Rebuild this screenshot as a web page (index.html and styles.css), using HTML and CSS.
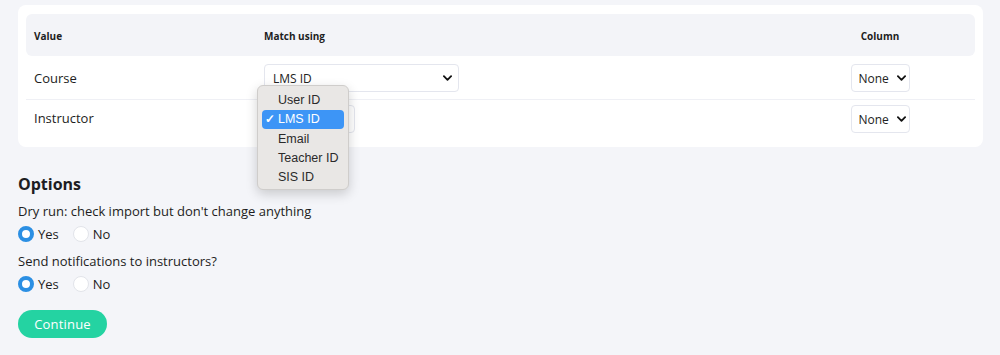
FILE: index.html
```html
<!DOCTYPE html>
<html>
<head>
<meta charset="utf-8">
<link rel="stylesheet" href="styles.css">
</head>
<body>
<div class="page">
  <div class="card">
    <div class="table">
      <div class="row head">
        <div class="cell">Value</div>
        <div class="cell">Match using</div>
        <div class="cell center">Column</div>
      </div>
      <div class="row first">
        <div class="cell label">Course</div>
        <div class="cell"><div class="select wide"><span>LMS ID</span><svg class="chev" viewBox="0 0 10 6"><path d="M1 1l4 4 4-4" /></svg></div></div>
        <div class="cell center"><div class="select small"><span>None</span><svg class="chev" viewBox="0 0 10 6"><path d="M1 1l4 4 4-4" /></svg></div></div>
      </div>
      <div class="row last">
        <div class="cell label">Instructor</div>
        <div class="cell"><div class="select mid"><span class="covered">LMS ID</span><svg class="chev" viewBox="0 0 10 6"><path d="M1 1l4 4 4-4" /></svg></div></div>
        <div class="cell center"><div class="select small"><span>None</span><svg class="chev" viewBox="0 0 10 6"><path d="M1 1l4 4 4-4" /></svg></div></div>
      </div>
    </div>
    <div class="menu">
      <div class="item">User ID</div>
      <div class="item selected"><span class="check">✓</span>LMS ID</div>
      <div class="item">Email</div>
      <div class="item">Teacher ID</div>
      <div class="item">SIS ID</div>
    </div>
  </div>

  <h2 class="title">Options</h2>
  <div class="question">Dry run: check import but don't change anything</div>
  <div class="radios">
    <label class="radio"><span class="dot on"></span>Yes</label>
    <label class="radio"><span class="dot"></span>No</label>
  </div>
  <div class="question">Send notifications to instructors?</div>
  <div class="radios">
    <label class="radio"><span class="dot on"></span>Yes</label>
    <label class="radio"><span class="dot"></span>No</label>
  </div>
  <button class="btn">Continue</button>
</div>
</body>
</html>
```
FILE: styles.css
```css
* { box-sizing: border-box; }
html, body { margin: 0; padding: 0; }
body {
  background: #f4f5f9;
  font-family: "Open Sans", "DejaVu Sans", sans-serif;
  color: #1d1d22;
  width: 1000px;
  height: 355px;
  overflow: hidden;
}
.page {
  padding: 5px 17px 0 18px;
}
.card {
  position: relative;
  background: #ffffff;
  border-radius: 8px;
  padding: 9px 8px 5px 8px;
}
.row {
  display: grid;
  grid-template-columns: 230px 1fr 120px;
  align-items: start;
  height: 43px;
  padding: 0 35px 0 8px;
  font-size: 13px;
}
.row.first {
  height: 44px;
  padding-top: 8px;
  border-bottom: 1px solid #eff0f5;
}
.row.last {
  height: 42px;
  padding-top: 5px;
}
.row.last .label { margin-top: -1px; }
.row.head {
  height: 42px;
  background: #f3f4f8;
  border-radius: 6px;
  align-items: center;
  font-size: 10px;
  font-weight: 700;
  padding-top: 1px;
}
.center { display: flex; justify-content: center; }
.label { line-height: 28px; }
.select {
  display: flex;
  align-items: center;
  justify-content: space-between;
  height: 28px;
  border: 1px solid #e4e6ee;
  border-radius: 4px;
  background: #fff;
  padding: 0 6px 0 8px;
  font-size: 12px;
  color: #222;
}
.select.wide { width: 195px; }
.select.mid { width: 91px; }
.select.small { width: 59px; padding: 0 3px 0 7px; }
.covered { visibility: hidden; }
.chev { width: 9px; height: 6px; }
.chev path { fill: none; stroke: #111; stroke-width: 2; stroke-linecap: round; stroke-linejoin: round; }

.menu {
  position: absolute;
  left: 239px;
  top: 80px;
  width: 92px;
  height: 105px;
  background: #e9e7e5;
  border: 1px solid #cfcdcb;
  border-radius: 6px;
  box-shadow: 0 4px 12px rgba(0,0,0,0.18);
  padding: 5px 4px;
  font-family: "Liberation Sans", Arial, sans-serif;
  font-size: 12.5px;
  color: #2a2a2a;
}
.item {
  position: relative;
  height: 19px;
  line-height: 19px;
  padding-left: 16px;
}
.item:nth-child(n+3) { top: 1px; }
.item.selected {
  background: #3d95f6;
  color: #fff;
  border-radius: 4px;
}
.check {
  position: absolute;
  left: 3px;
  top: 0;
  font-size: 12px;
  font-weight: 700;
}

.title {
  margin: 26px 0 0 0;
  font-size: 16px;
  font-weight: 700;
  line-height: 22px;
}
.question {
  margin-top: 7px;
  font-size: 13px;
  line-height: 18px;
}
.radios {
  display: flex;
  gap: 14px;
  margin-top: 5px;
  height: 18px;
  align-items: center;
  font-size: 13px;
}
.radio { display: flex; align-items: center; gap: 4px; }
.radios + .question { margin-top: 9px; }
.dot {
  width: 16px;
  height: 16px;
  border-radius: 50%;
  border: 1px solid #e2e4ea;
  background: #fff;
}
.dot.on {
  border: 4.5px solid #2b8fe3;
  background: #fff;
}
.btn {
  display: block;
  margin-top: 17px;
  width: 89px;
  height: 28px;
  border: none;
  border-radius: 14px;
  background: #24d3a2;
  color: #fff;
  font-family: inherit;
  font-size: 13px;
  letter-spacing: 0.2px;
}
```
